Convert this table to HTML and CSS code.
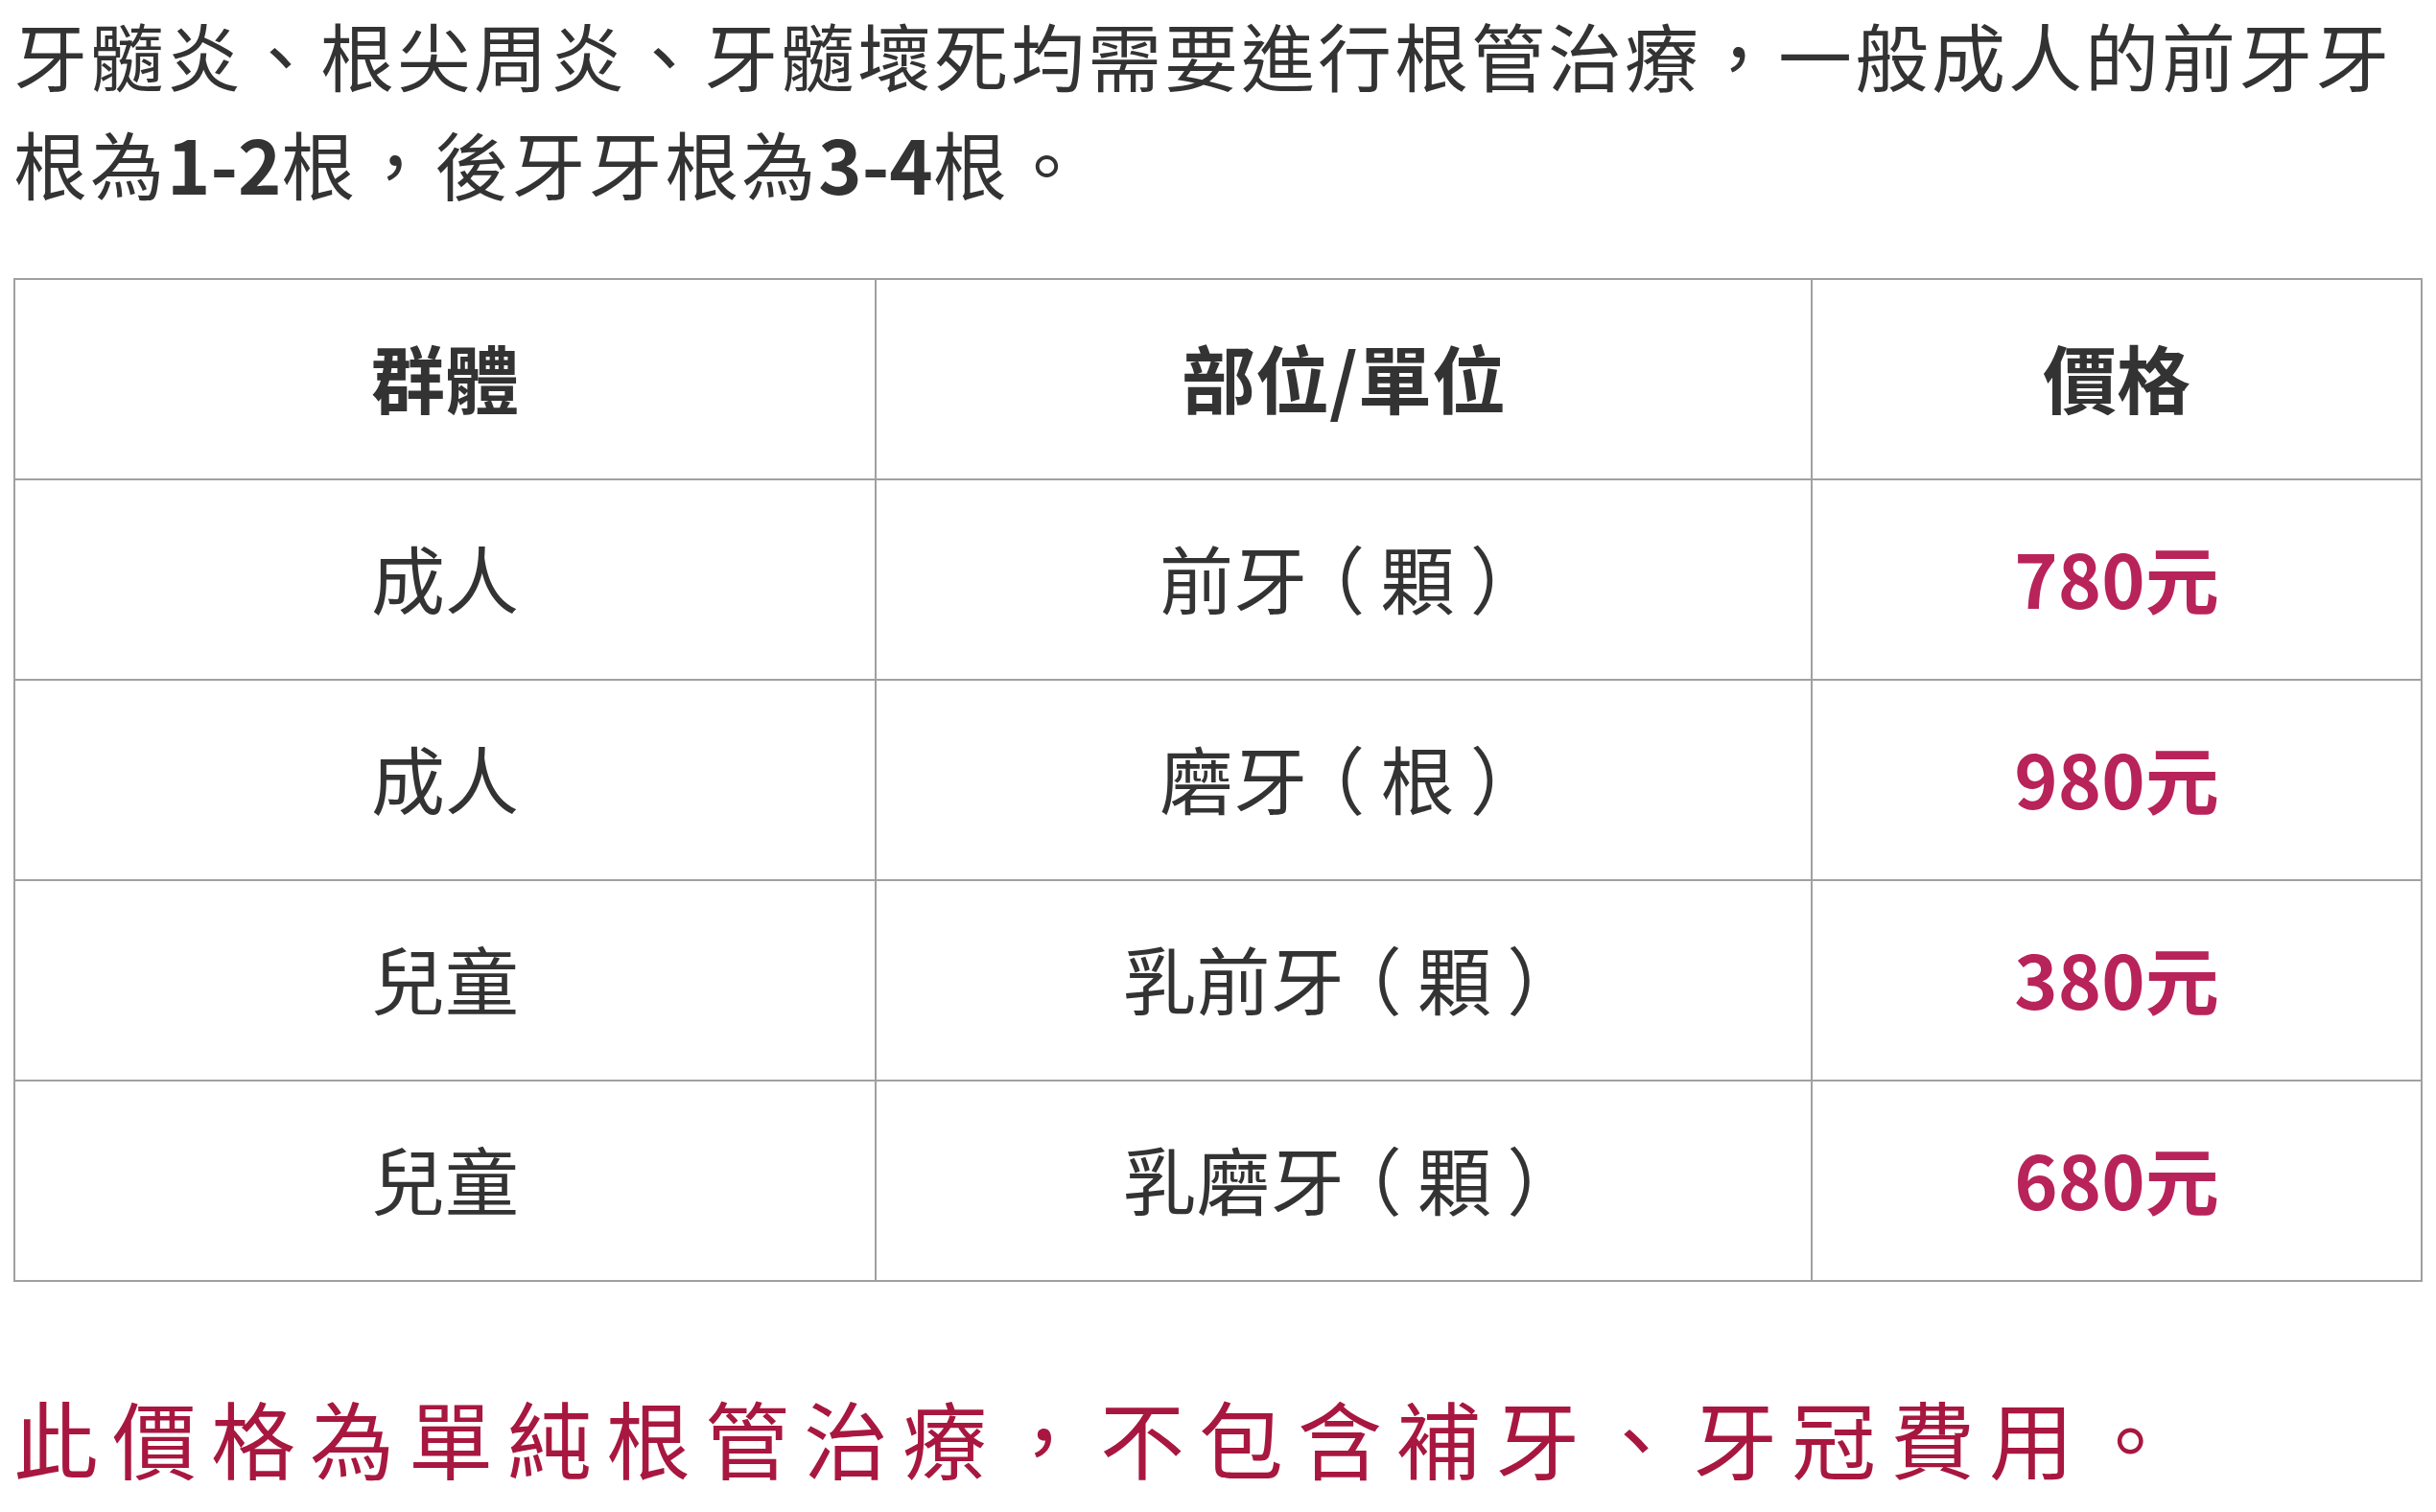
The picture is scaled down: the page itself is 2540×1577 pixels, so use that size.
FILE: index.html
```html
<!DOCTYPE html>
<html lang="zh-Hant">
<head>
<meta charset="utf-8">
<title>根管治療價格</title>
<link rel="stylesheet" href="styles.css">
</head>
<body>
<div class="page">
  <p class="intro"><span class="seg">牙髓炎、根尖周炎、牙髓壞死均需要進行根管治療，一般成人的前牙牙</span><span class="seg">根為</span><span class="num">1-2</span><span class="seg">根，後牙牙根為</span><span class="num">3-4</span><span class="seg">根。</span></p>
  <table class="price-table">
    <colgroup>
      <col class="c1">
      <col class="c2">
      <col class="c3">
    </colgroup>
    <thead>
      <tr><th>群體</th><th>部位/單位</th><th>價格</th></tr>
    </thead>
    <tbody>
      <tr><td>成人</td><td>前牙<span class="paren">（</span>顆<span class="paren">）</span></td><td class="price">780元</td></tr>
      <tr><td>成人</td><td>磨牙<span class="paren">（</span>根<span class="paren">）</span></td><td class="price">980元</td></tr>
      <tr><td>兒童</td><td>乳前牙<span class="paren">（</span>顆<span class="paren">）</span></td><td class="price">380元</td></tr>
      <tr><td>兒童</td><td>乳磨牙<span class="paren">（</span>顆<span class="paren">）</span></td><td class="price">680元</td></tr>
    </tbody>
  </table>
  <p class="note">此價格為單純根管治療，不包含補牙、牙冠費用。</p>
</div>
</body>
</html>
```

FILE: styles.css
```css
html, body {
  margin: 0;
  padding: 0;
  background: #ffffff;
}
.page {
  padding: 0 16px 0 14px;
  font-family: "Noto Sans CJK TC", "Noto Sans", sans-serif;
  color: #333333;
}
.intro {
  margin: 0;
  font-size: 77px;
  line-height: 113px;
  letter-spacing: 3px;
}
.intro .num {
  font-weight: 700;
  letter-spacing: 0;
}
.price-table {
  margin-top: 64px;
  width: 2510px;
  border-collapse: collapse;
  table-layout: fixed;
  border: 2px solid #a0a0a0;
}
.c1 { width: 898px; }
.c2 { width: 976px; }
.c3 { width: 636px; }
.price-table th,
.price-table td {
  border: 2px solid #a0a0a0;
  text-align: center;
  vertical-align: middle;
  font-size: 77px;
  line-height: 1;
  padding: 0 0 6px 0;
}
.price-table th {
  height: 201px;
  font-weight: 700;
  color: #333333;
}
.price-table td {
  height: 201px;
  font-weight: 400;
  color: #333333;
}
.price-table td.price {
  font-weight: 700;
  color: #b8235a;
}
.paren {
  font-feature-settings: "palt" 1;
  margin: 0 19px;
}
.note {
  margin: 106px 0 0 0;
  font-size: 88px;
  line-height: 110px;
  letter-spacing: 15px;
  color: #a8173f;
}
```
